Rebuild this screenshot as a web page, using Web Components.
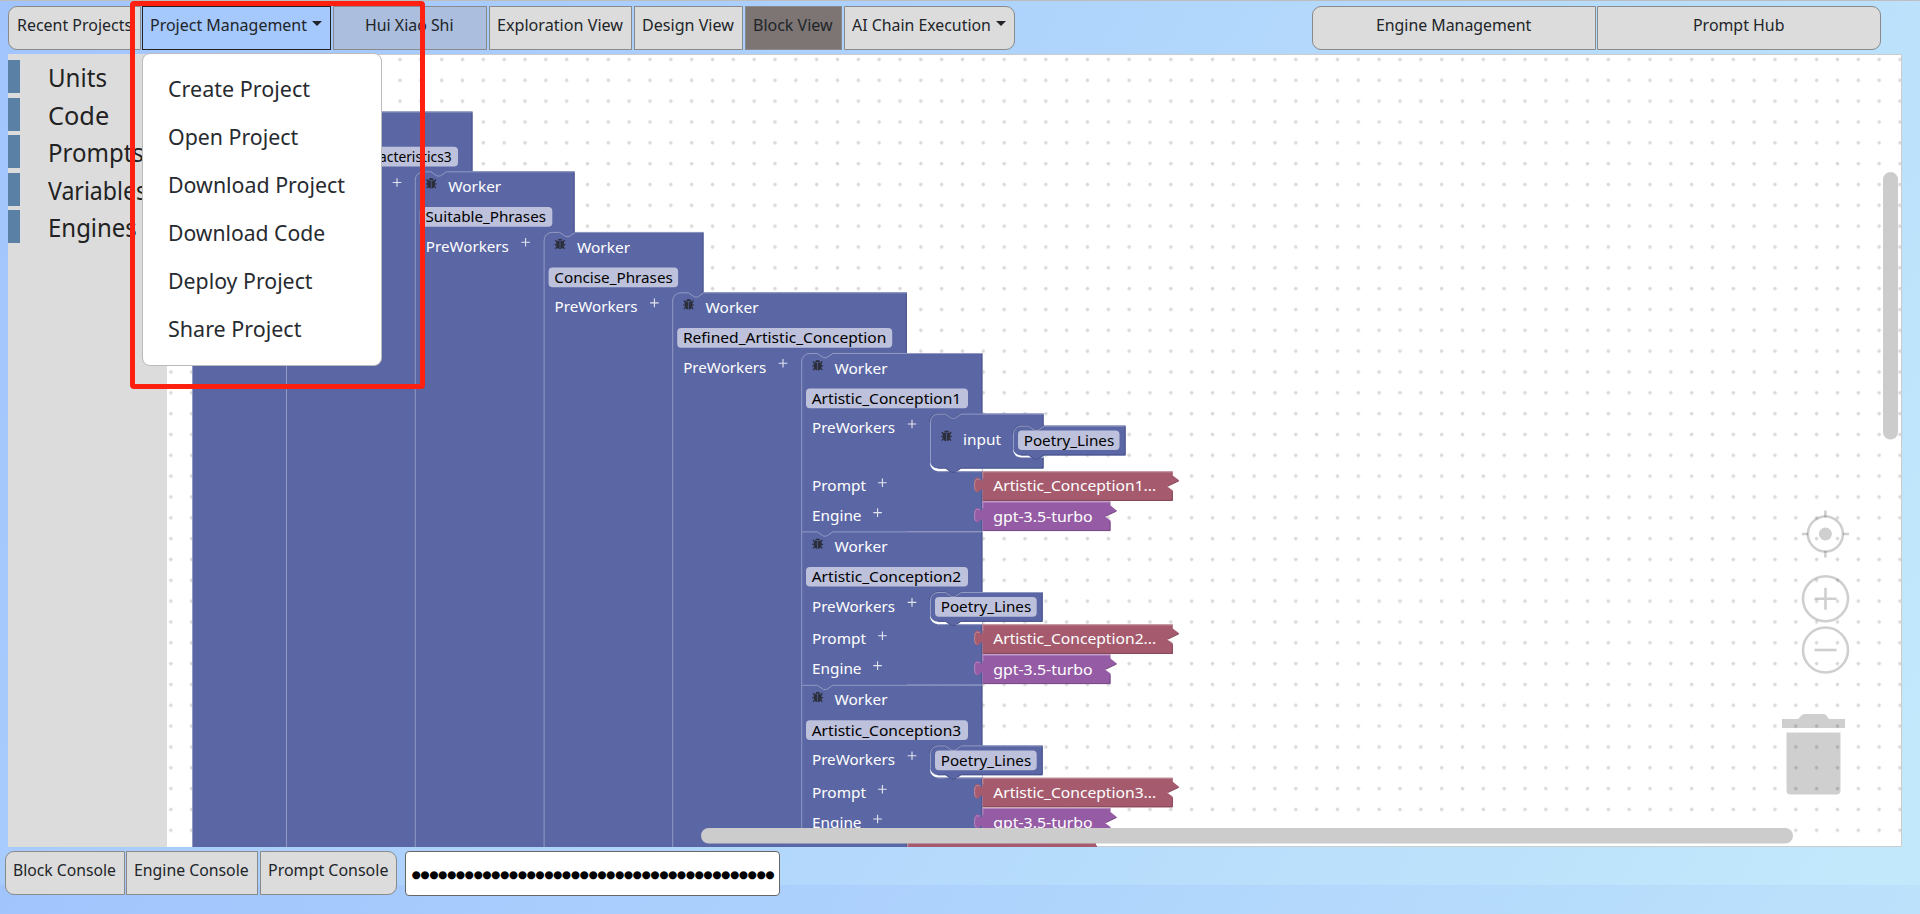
<!DOCTYPE html>
<html lang="en">
<head>
<meta charset="utf-8">
<title>Block View</title>
<style>
html,body{margin:0;height:100%;overflow:hidden}
body{font-family:"Noto Sans","Open Sans",sans-serif;color:#212529}
</style>
</head>
<body>
<studio-app></studio-app>
<script>
const define=(name,html,init)=>{
  const t=document.createElement('template');t.innerHTML=html;
  customElements.define(name,class extends HTMLElement{
    constructor(){super();this.attachShadow({mode:'open'}).appendChild(t.content.cloneNode(true));}
    connectedCallback(){if(init)init.call(this,this.shadowRoot);}
  });
};

/* Text run condensed to a given width */
define('fit-label',`<style>:host{display:inline-block;white-space:pre;text-align:left}
span{display:inline-block;transform-origin:0 50%}</style><span><slot></slot></span>`,function(r){
  const s=r.querySelector('span'),w=+this.getAttribute('w');
  this.style.width=w+'px';
  s.style.transform=`scaleX(${w/s.offsetWidth})`;
});

define('tool-button',`<style>
:host{display:flex;box-sizing:border-box;height:44px;border:1px solid #8a8a8a;background:#dcdcdc;align-items:center;justify-content:center;font-size:16.8px;line-height:24px;padding:0 1px 7px 0;flex:none}
:host([edge=left]){border-radius:9px 0 0 9px}
:host([edge=right]){border-radius:0 9px 9px 0}
:host([tone=active]){background:#a5c8fd;border-color:#222}
:host([tone=name]){background:#abbedd}
:host([tone=dark]){background:#7c7574}
i{display:none;margin:0 0 3px 5px;border:5px solid transparent;border-top-color:#212529;border-bottom:0}
:host([menu]) i{display:block}
</style><slot></slot><i></i>`,function(){this.style.width=this.getAttribute('width')+'px';});

define('top-bar',`<style>
:host{display:flex;box-sizing:border-box;height:54px;padding:5px 0 0 8px;border-top:1px solid #bdbdbd}
.g{display:flex;gap:2px}.r{margin-left:297px;gap:1px}
</style>
<div class="g">
<tool-button edge="left" width="133"><fit-label w="115">Recent Projects</fit-label></tool-button>
<tool-button tone="active" menu width="189" style="margin-left:-1px"><fit-label w="157">Project Management</fit-label></tool-button>
<tool-button tone="name" width="154"><fit-label w="89">Hui Xiao Shi</fit-label></tool-button>
<tool-button width="143"><fit-label w="126">Exploration View</fit-label></tool-button>
<tool-button width="109"><fit-label w="92">Design View</fit-label></tool-button>
<tool-button tone="dark" width="97"><fit-label w="80">Block View</fit-label></tool-button>
<tool-button edge="right" menu width="171"><fit-label w="139">AI Chain Execution</fit-label></tool-button>
</div>
<div class="g r">
<tool-button edge="left" width="284"><fit-label w="155">Engine Management</fit-label></tool-button>
<tool-button edge="right" width="284"><fit-label w="91">Prompt Hub</fit-label></tool-button>
</div>`);

define('tool-category',`<style>:host{display:flex;height:33px;border-left:12px solid #5b80a5;padding-left:28px;font-size:24.5px;line-height:35px;color:#222}</style><slot></slot>`);
define('tool-box',`<style>:host{display:flex;flex-direction:column;gap:4.5px;box-sizing:border-box;width:159px;padding-top:6px;background:#dcdcdc;flex:none}</style>
<tool-category><fit-label w="59">Units</fit-label></tool-category>
<tool-category><fit-label w="61">Code</fit-label></tool-category>
<tool-category><fit-label w="96">Prompts</fit-label></tool-category>
<tool-category><fit-label w="99">Variables</fit-label></tool-category>
<tool-category><fit-label w="89">Engines</fit-label></tool-category>`);

define('block-canvas',`<style>:host{display:block;flex:none;width:1735px;height:793px;background:#fff}svg{display:block}
text{font-family:"Noto Sans","Open Sans",sans-serif;font-size:14.8px}</style><svg width="1735" height="793" viewBox="167 54 1735 793"></svg>`,function(r){
  const B='#5b67a5',L='#9299c2',D='#49528a';
  let o=`<defs><pattern id="dots" width="20.833" height="20.833" patternUnits="userSpaceOnUse" x="160.4" y="48.98"><path d="M8.6 10.42h3.7M10.42 8.6v3.7" stroke="#ddd" stroke-width="1.7"/><rect x="9.3" y="9.3" width="2.2" height="2.2" fill="#d6d6d6"/></pattern>
  <g id="bug"><path d="M-2.7-3A2.8 2.6 0 0 1 2.7-3z"/><path d="M-3.9-2.5H-.3V5.5C-2.8 5.2-3.9 3.6-3.9 1.4zM3.9-2.5H.3V5.5C2.8 5.2 3.9 3.6 3.9 1.4z"/><path d="M-3-1.5L-4.8-3.5M3-1.5L4.8-3.5M-3 1H-5.4M3 1H5.4M-3 3L-4.6 5.2M3 3L4.6 5.2" stroke="#2c2f3c" stroke-width="1.2"/></g></defs>
  <rect x="167" y="54" width="1735" height="793" fill="#fff"/><rect x="167" y="54" width="1735" height="793" fill="url(#dots)"/>`;
  const top=(x,y,rt,sq)=>(sq?`M${x} ${y}`:`M${x} ${y+8}a8 8 0 0 1 8-8`)+`H${x+15.6}l6.2 4.2h3.1l6.2-4.2H${rt}`;
  const body=(x,y,rt,bt,sq)=>{o+=`<path d="${top(x,y,rt,sq)}V${bt}H${x}z" fill="${B}"/><path d="${top(x+.5,y+.5,rt,sq)}" fill="none" stroke="${L}"/><path d="M${x+.5} ${y+(sq?0:8)}V${bt}" stroke="${L}"/><path d="M${rt-.5} ${y+1}V${bt}" stroke="${D}"/>`;};
  const kid=(x,y,rt,bt)=>{
    o+=`<path d="${top(x,y,rt)}V${bt}H${x+31}l-6.2 4.2h-3.1l-6.2-4.2H${x+8}a8 8 0 0 1-8-8z" fill="${B}"/>
    <path d="M${x-.5} ${y+8}a8 8 0 0 1 8-8H${x+15.6}l6.2 4.2h3.1l6.2-4.2" fill="none" stroke="${D}"/>
    <path d="M${x+.5} ${bt-7}V${y+8}a7.5 7.5 0 0 1 7.5-7.5H${x+15.6}l6.2 4.2h3.1l6.2-4.2H${rt}" fill="none" stroke="${L}"/>
    <path d="M${rt-.5} ${y+1}V${bt-.5}H${x+31}l-6.2 4.2h-3.1l-6.2-4.2H${x+8}" fill="none" stroke="${D}"/>`;};
  const cavity=(x,bt,rt)=>{o+=`<path d="M${x} ${bt-12}V${bt-8}a8 8 0 0 0 8 8H${rt}V${bt-5}H${x+4}V${bt-12}z" fill="#fff"/>`;};
  const t=(s,x,y,w,c='#fff')=>{o+=`<text x="${x}" y="${y}" fill="${c}" textLength="${w}" lengthAdjust="spacingAndGlyphs">${s}</text>`;};
  const plus=(x,y)=>{o+=`<path d="M${x-4.3} ${y}h8.6M${x} ${y-4.3}v8.6" stroke="#e3e5f0" stroke-width="1.1"/>`;};
  const field=(s,x,y,w,tw)=>{o+=`<rect x="${x}" y="${y}" width="${w}" height="19.7" rx="4" fill="#bdc1db"/>`;t(s,x+5.7,y+15.3,tw,'#000');};
  const bug=(x,y)=>{o+=`<use href="#bug" x="${x}" y="${y}" fill="#2c2f3c"/>`;};
  const value=(s,y,rt,tw,c,l,d,x=982.4)=>{
    const p=`V${y+4}l6.5 5.2-12 5.8 5.5 4V${y+29.5}`;
    o+=`<path d="M${x} ${y}H${rt}${p}H${x}V${y+18}l-2 0c-1 3-6.3 6-6.3-4.5s5.3-7.5 6.3-4.5l2 0z" fill="${c}"/><path d="M${x} ${y+.5}H${rt}M${x+.5} ${y}V${y+6.5}M${x-2} ${y+7.5}c-1 1-2 .5-3 .3c-2 0-2.8 2-2.8 6s.5 5.500 2 5.500" fill="none" stroke="${l}"/><path d="M${rt-.5} ${y+20}V${y+29}H${x+1}M${rt+6} ${y+9.5}l-11 5.2" fill="none" stroke="${d}"/>`;
    if(s)t(s,x+10.8,y+20,tw);};
  body(192,75,360,860);
  body(286,111.5,472.5,860);
  field('Characteristics3',343,146.800,115,103);plus(397,182.5);
  [[414.8,171.3,574.6,'Suitable_Phrases',132.5,120.5],[543.6,231.9,703.5,'Concise_Phrases',129.5,118.5],[672.2,292.3,906.8,'Refined_Artistic_Conception',215,203.5]].forEach(([x,y,rt,n,w,tw])=>{
    body(x,y,rt,860);bug(x+16.4,y+11.7);t('Worker',x+33.4,y+20.8,53);field(n,x+5,y+35.7,w,tw);t('PreWorkers',x+11,y+80.300,83);plus(x+110.8,y+71);
  });
  [[353,531.4,1],[531.4,684.8,2],[684.8,838.5,3]].forEach(([y,bt,n])=>{
    const x=801.2,rt=982.4;
    body(x,y,rt,bt,n>1);
    bug(817.7,y+11.9);t('Worker',834.5,y+20.6,53);field('Artistic_Conception'+n,806,y+35.5,162,149.5);
    t('PreWorkers',812,y+80.3,83);plus(912,y+71);
    const cy=y+60.6,cb=n==1?471.2:y+92.8;
    cavity(930,cb,rt);
    if(n==1){
      kid(930,cy,1043.6,468.6);
      o+='<path d="M1013 446V449a8 8 0 0 0 8 8.500H1043.600V452H1017V446z" fill="#fff"/>';
      bug(946.5,435.5);t('input',963,445,38);
      kid(1013,425.6,1125.6,455.4);field('Poetry_Lines',1018,430.4,101.5,90.5);
    }else{
      kid(930,cy,1042.7,y+90.4);field('Poetry_Lines',935,y+65.7,101.7,90.5);
    }
    o+=`<path d="M937 ${cb+.5}H945M956 ${cb+.5}H982" stroke="${L}" stroke-width=".8"/>`;
    t('Prompt',812,cb+20.2,54);plus(882.4,cb+11.6);
    t('Engine',812,cb+50.2,49.5);plus(877.6,cb+41.4);
    value('Artistic_Conception'+n+'...',cb+.2,1172.8,163,'#a55b6d','#c08c98','#84485a');
    value('gpt-3.5-turbo',cb+30.4,1110.5,99.5,'#955ba5','#b58cc0','#774984');
  });
  o+='<rect x="907" y="838.6" width="100" height="4" fill="#fff"/>';
  value('',841,1096,0,'#a55b6d','#c08c98','#84485a',907.3);
  /* zoom controls, bin and scrollbars */
  o+=`<g fill="none" stroke="#000" stroke-opacity=".19" stroke-width="2.6"><circle cx="1825.4" cy="534" r="17.5"/><path d="M1825.4 510.500v6.5M1825.4 551v6.5M1802 534h6M1843 534h6"/><circle cx="1825.4" cy="534" r="6.5" fill="#000" fill-opacity=".19" stroke="none"/>
  <circle cx="1825.5" cy="598.7" r="22.5"/><path d="M1814.5 598.7h22M1825.5 587.7v9.700M1825.5 600v9.7"/><circle cx="1825.5" cy="650" r="22.5"/><path d="M1814.5 650h22"/></g>
  <g fill="#000" fill-opacity=".19"><path d="M1782 719h16l4-4q1-1 3-1h18q2 0 3 1l3 4h16v9h-63zM1786.5 732.5h54v58q0 4-4 4h-46q-4 0-4-4z"/></g>
  <rect x="701" y="828" width="1092" height="15.4" rx="7.7" fill="#ccc"/><rect x="1883" y="172" width="15" height="267.5" rx="7.5" fill="#ccc"/>
  <path d="M167 54.5H1901.500V846.5H1097" fill="none" stroke="#ccc"/>`;
  r.querySelector('svg').innerHTML=o;
});

define('menu-item',`<style>:host{display:block;height:48px;font-size:21px;line-height:48px;padding-left:24.5px;color:#272b30}</style><slot></slot>`);
define('project-menu',`<style>:host{display:block;position:absolute;left:142px;top:53px;width:239.5px;height:313px;box-sizing:border-box;border:1px solid #bbb;border-radius:8px;background:#fff;padding-top:10.5px}</style>
<menu-item><fit-label w="142.500">Create Project</fit-label></menu-item>
<menu-item><fit-label w="130">Open Project</fit-label></menu-item>
<menu-item><fit-label w="177">Download Project</fit-label></menu-item>
<menu-item><fit-label w="157">Download Code</fit-label></menu-item>
<menu-item><fit-label w="145">Deploy Project</fit-label></menu-item>
<menu-item><fit-label w="133">Share Project</fit-label></menu-item>`);
define('highlight-frame',`<style>:host{display:block;position:absolute;left:130px;top:1px;width:295px;height:388px;box-sizing:border-box;border:5px solid #ff2010;border-radius:4px}</style>`);

define('secret-field',`<style>:host{display:block;box-sizing:border-box;width:375px;height:45px;border:1px solid #666;border-radius:4px;background:#fff;margin-left:8px}svg{display:block}
text{font:10.6px "DejaVu Sans",sans-serif;fill:#000}</style><svg width="373" height="43"><text x="5.5" y="25.500" textLength="363" lengthAdjust="spacing"></text></svg>`,function(r){r.querySelector('text').textContent='●'.repeat(41);});
define('console-bar',`<style>:host{display:flex;padding:4px 0 0 5px;height:63px;box-sizing:border-box}.g{display:flex}</style>
<div class="g">
<tool-button edge="left" width="120"><fit-label w="103">Block Console</fit-label></tool-button>
<tool-button width="132" style="margin:0 2px 0 1px"><fit-label w="115">Engine Console</fit-label></tool-button>
<tool-button edge="right" width="137"><fit-label w="120">Prompt Console</fit-label></tool-button>
</div><secret-field></secret-field>`);

define('studio-app',`<style>:host{display:block;position:relative;width:1920px;height:914px;overflow:hidden;background:linear-gradient(120deg,#a1c4fd,#c2e9fb) 0 0/100% 885px}
main{display:flex;padding-left:8px;height:793px}</style>
<top-bar></top-bar><main><tool-box></tool-box><block-canvas></block-canvas></main><console-bar></console-bar>
<project-menu></project-menu><highlight-frame></highlight-frame>`);
</script>
</body>
</html>
